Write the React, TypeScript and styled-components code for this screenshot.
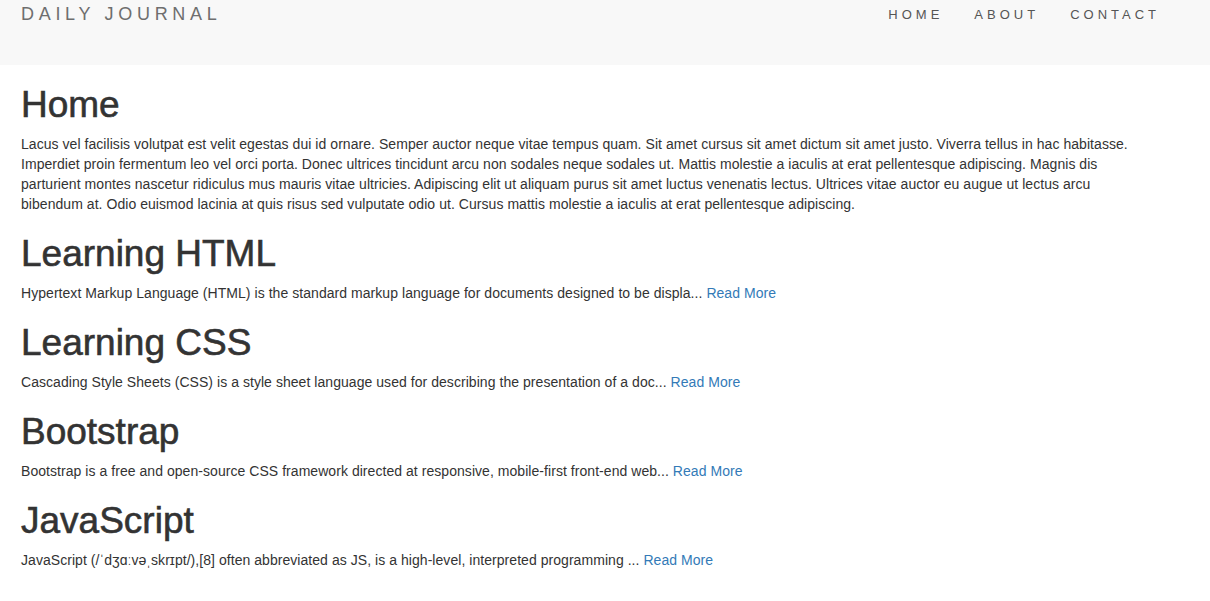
import React from "react";
import styled, { createGlobalStyle } from "styled-components";

const GlobalStyle = createGlobalStyle`
  html, body { margin: 0; padding: 0; background: #ffffff; }
  body {
    font-family: "Liberation Sans", Arial, sans-serif;
    font-size: 14px;
    line-height: 20px;
    letter-spacing: 0.05px;
    color: #333333;
  }
  * { box-sizing: border-box; }
`;

const Navbar = styled.header`
  height: 65px;
  background: #f8f8f8;
  display: flex;
  justify-content: space-between;
  align-items: flex-start;
  padding: 0 35px 0 21px;
`;

const Brand = styled.a`
  font-size: 18px;
  line-height: 20px;
  letter-spacing: 4.7px;
  color: #6e6e6e;
  text-decoration: none;
  padding-top: 4px;
`;

const NavList = styled.nav`
  display: flex;
  align-items: flex-start;
`;

const NavLink = styled.a`
  font-size: 13px;
  line-height: 20px;
  letter-spacing: 4px;
  color: #555555;
  text-decoration: none;
  padding: 5px 15px 0 16px;
`;

const Main = styled.main`
  padding: 0 20px 0 21px;
  max-width: 1160px;
`;

const Title = styled.h1`
  font-size: 37px;
  line-height: 39px;
  font-weight: 500;
  letter-spacing: 0;
  -webkit-text-stroke: 0.6px #333333;
  margin: 20px 0 10px;
  color: #333333;
`;

const Text = styled.p`
  margin: 0;
`;

const More = styled.a`
  color: #337ab7;
  text-decoration: none;
`;

const posts = [
  {
    title: "Learning HTML",
    body: "Hypertext Markup Language (HTML) is the standard markup language for documents designed to be displa...",
  },
  {
    title: "Learning CSS",
    body: "Cascading Style Sheets (CSS) is a style sheet language used for describing the presentation of a doc...",
  },
  {
    title: "Bootstrap",
    body: "Bootstrap is a free and open-source CSS framework directed at responsive, mobile-first front-end web...",
  },
  {
    title: "JavaScript",
    body: "JavaScript (/ˈdʒɑːvəˌskrɪpt/),[8] often abbreviated as JS, is a high-level, interpreted programming ...",
  },
];

export default function App() {
  return (
    <>
      <GlobalStyle />
      <Navbar>
        <Brand href="#">DAILY JOURNAL</Brand>
        <NavList>
          <NavLink href="#">HOME</NavLink>
          <NavLink href="#">ABOUT</NavLink>
          <NavLink href="#">CONTACT</NavLink>
        </NavList>
      </Navbar>
      <Main>
        <Title>Home</Title>
        <Text>
          Lacus vel facilisis volutpat est velit egestas dui id ornare. Semper auctor neque vitae tempus quam. Sit amet
          cursus sit amet dictum sit amet justo. Viverra tellus in hac habitasse. Imperdiet proin fermentum leo vel orci
          porta. Donec ultrices tincidunt arcu non sodales neque sodales ut. Mattis molestie a iaculis at erat
          pellentesque adipiscing. Magnis dis parturient montes nascetur ridiculus mus mauris vitae ultricies. Adipiscing
          elit ut aliquam purus sit amet luctus venenatis lectus. Ultrices vitae auctor eu augue ut lectus arcu bibendum
          at. Odio euismod lacinia at quis risus sed vulputate odio ut. Cursus mattis molestie a iaculis at erat
          pellentesque adipiscing.
        </Text>
        {posts.map((p) => (
          <section key={p.title}>
            <Title>{p.title}</Title>
            <Text>
              {p.body} <More href="#">Read More</More>
            </Text>
          </section>
        ))}
      </Main>
    </>
  );
}
